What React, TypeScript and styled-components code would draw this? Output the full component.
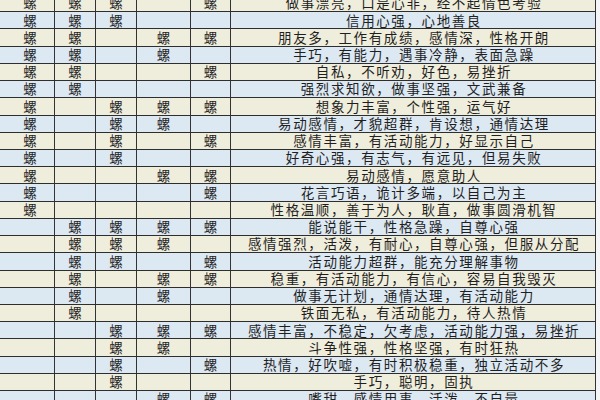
import React from "react";
import styled, { createGlobalStyle } from "styled-components";

const Global = createGlobalStyle`
  html, body { margin: 0; padding: 0; background: #f3f5f6; overflow: hidden; }
  body { width: 600px; height: 400px; font-family: "Noto Sans CJK SC", "Noto Sans", sans-serif; }
`;

const Table = styled.div`
  width: 600px;
  margin-top: -5px;
  display: flex;
  flex-direction: column;
`;

const Row = styled.div<{ $alt: boolean }>`
  display: grid;
  grid-template-columns: 55px 41px 41px 54px 40px 365px 4px;
  height: 17.23px;
  box-sizing: border-box;
  border-bottom: 1.5px solid #2e2e2e;
  background: ${(p) => (p.$alt ? "#dce8f2" : "#efeddb")};
`;

const Cell = styled.div<{ $pad?: number }>`
  box-sizing: border-box;
  border-right: 1.8px solid #333;
  display: flex;
  align-items: center;
  justify-content: center;
  padding-left: ${(p) => p.$pad ?? 0}px;
  font-size: 13.5px;
  line-height: 1;
  color: #262626;
  overflow: hidden;
  white-space: nowrap;
`;

const TextCell = styled(Cell)`
  letter-spacing: 1.6px;
  padding-left: 2px;
  color: #1f1f1f;
`;

const Edge = styled.div`
  background: #f3f5f6;
  margin-bottom: -1.5px;
`;

const rows: [string, string][] = [
  ["11101", "做事漂亮，口是心非，经不起情色考验"],
  ["11100", "信用心强，心地善良"],
  ["11011", "朋友多，工作有成绩，感情深，性格开朗"],
  ["11010", "手巧，有能力，遇事冷静，表面急躁"],
  ["11001", "自私，不听劝，好色，易挫折"],
  ["11000", "强烈求知欲，做事坚强，文武兼备"],
  ["10111", "想象力丰富，个性强，运气好"],
  ["10110", "易动感情，才貌超群，肯设想，通情达理"],
  ["10101", "感情丰富，有活动能力，好显示自己"],
  ["10100", "好奇心强，有志气，有远见，但易失败"],
  ["10011", "易动感情，愿意助人"],
  ["10001", "花言巧语，诡计多端，以自己为主"],
  ["10000", "性格温顺，善于为人，耿直，做事圆滑机智"],
  ["01111", "能说能干，性格急躁，自尊心强"],
  ["01110", "感情强烈，活泼，有耐心，自尊心强，但服从分配"],
  ["01101", "活动能力超群，能充分理解事物"],
  ["01011", "稳重，有活动能力，有信心，容易自我毁灭"],
  ["01010", "做事无计划，通情达理，有活动能力"],
  ["01000", "铁面无私，有活动能力，待人热情"],
  ["00111", "感情丰富，不稳定，欠考虑，活动能力强，易挫折"],
  ["00110", "斗争性强，性格坚强，有时狂热"],
  ["00101", "热情，好吹嘘，有时积极稳重，独立活动不多"],
  ["00100", "手巧，聪明，固执"],
  ["00011", "嘴甜，感情用事，活泼，不自量"],
];

export default function App() {
  return (
    <>
      <Global />
      <Table>
        {rows.map(([mask, text], i) => (
          <Row key={i} $alt={i % 2 === 1}>
            {mask.split("").map((m, j) => (
              <Cell key={j} $pad={j === 0 ? 6 : 0}>
                {m === "1" ? "螺" : ""}
              </Cell>
            ))}
            <TextCell>{text}</TextCell>
            <Edge />
          </Row>
        ))}
      </Table>
    </>
  );
}
